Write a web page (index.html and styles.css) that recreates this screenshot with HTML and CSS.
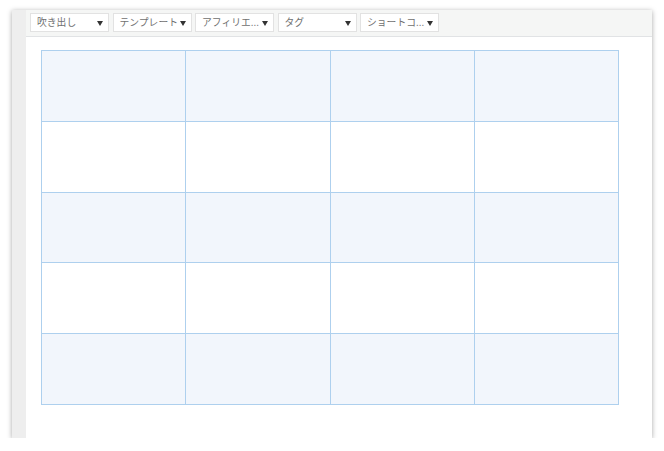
FILE: index.html
```html
<!DOCTYPE html>
<html lang="ja">
<head>
<meta charset="utf-8">
<link rel="stylesheet" href="styles.css">
</head>
<body>
<div class="window">
  <div class="strip"></div>
  <div class="main">
    <div class="toolbar">
      <div class="dd"><span class="label">吹き出し</span><span class="arrow"></span></div>
      <div class="dd"><span class="label">テンプレート</span><span class="arrow"></span></div>
      <div class="dd"><span class="label">アフィリエ...</span><span class="arrow"></span></div>
      <div class="dd"><span class="label">タグ</span><span class="arrow"></span></div>
      <div class="dd"><span class="label">ショートコ...</span><span class="arrow"></span></div>
    </div>
    <div class="content">
      <table class="grid">
        <tr class="odd"><td></td><td></td><td></td><td></td></tr>
        <tr><td></td><td></td><td></td><td></td></tr>
        <tr class="odd"><td></td><td></td><td></td><td></td></tr>
        <tr><td></td><td></td><td></td><td></td></tr>
        <tr class="odd"><td></td><td></td><td></td><td></td></tr>
      </table>
    </div>
  </div>
</div>
</body>
</html>
```
FILE: styles.css
```css
html, body {
  margin: 0;
  padding: 0;
  background: #ffffff;
}
body {
  padding: 10px 0 0 12px;
  font-family: "Noto Sans CJK JP", "Noto Sans", sans-serif;
}
.window {
  width: 640px;
  height: 428px;
  display: flex;
  background: #ffffff;
  box-shadow: 0 1px 5px rgba(0, 0, 0, 0.35);
}
.strip {
  width: 14px;
  flex: none;
  background: #eeeeee;
}
.main {
  flex: 1;
  display: flex;
  flex-direction: column;
}
.toolbar {
  height: 27px;
  box-sizing: border-box;
  background: #f5f6f5;
  border-bottom: 1px solid #e1e3e5;
  display: flex;
  gap: 3.5px;
  padding: 3px 0 0 4px;
}
.dd {
  width: 79px;
  height: 19px;
  box-sizing: border-box;
  background: #ffffff;
  border: 1px solid #e2e2e2;
  display: flex;
  align-items: center;
  justify-content: space-between;
  padding: 0 5px 0 6px;
  color: #707070;
}
.label {
  font-size: 9.8px;
  line-height: 1;
  white-space: nowrap;
}
.arrow {
  width: 0;
  height: 0;
  border-left: 3px solid transparent;
  border-right: 3px solid transparent;
  border-top: 5px solid #333333;
  margin-top: 1px;
}
.content {
  padding: 13px 0 0 15px;
}
.grid {
  width: 578px;
  height: 355px;
  border-collapse: collapse;
  table-layout: fixed;
}
.grid td {
  border: 1px solid #aed0ee;
  padding: 0;
}
.grid tr.odd td {
  background: #f2f6fc;
}
```
